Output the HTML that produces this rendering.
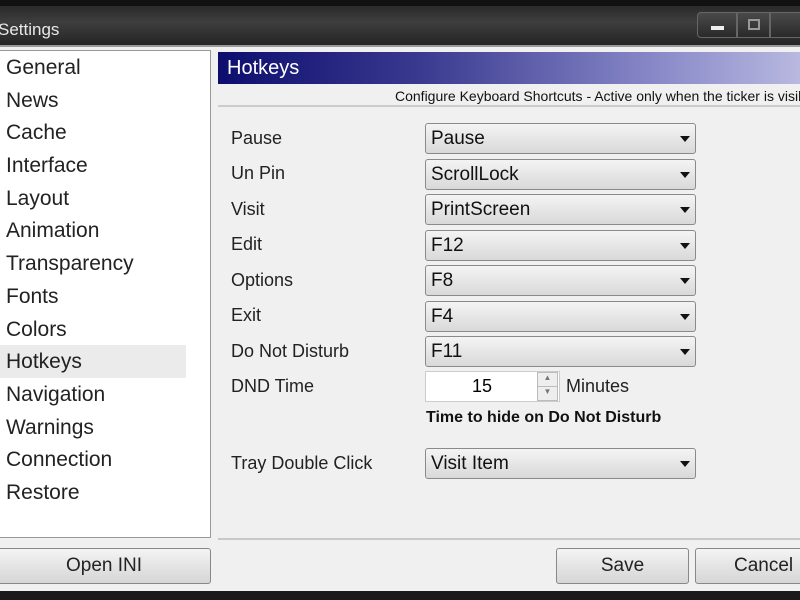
<!DOCTYPE html>
<html><head><style>
*{margin:0;padding:0;box-sizing:border-box}
body{width:800px;height:600px;overflow:hidden;background:#1a1a1a;font-family:"Liberation Sans",sans-serif;position:relative}
.title{position:absolute;left:0;top:0;width:800px;height:46px;background:linear-gradient(#2a2a2a,#3e3e3e 40%,#242424);border-top:6px solid #111}
.title span{position:absolute;left:-2px;top:14px;color:#e8e8e8;font-size:17px}
.ctl{position:absolute;top:6px;height:26px;border:1px solid #666;background:linear-gradient(#4a4a4a,#2a2a2a)}
.body{position:absolute;left:0;top:45px;width:800px;height:546px;background:#f0f0f0;border-top:2px solid #999}
.list{position:absolute;left:-2px;top:3px;width:213px;height:488px;background:#fff;border:1px solid #999}
.list div{height:32.7px;line-height:33px;font-size:21px;color:#222;padding-left:7px}
.list .sel{background:#ebebeb;margin-right:24px}
.hdr{position:absolute;left:218px;top:5px;width:582px;height:32px;background:linear-gradient(90deg,#0d0d6e,#3a3a90 35%,#8888c8 75%,#b8b8e0);color:#fff;font-size:20px;padding:5px 0 0 9px}
.sub{position:absolute;left:218px;top:38px;width:582px;height:22px;border-bottom:2px solid #ccc;font-size:14px;white-space:nowrap;padding-left:177px;padding-top:3px;color:#111}
.lbl{position:absolute;left:231px;font-size:18px;color:#222}
.cb{position:absolute;left:425px;width:271px;height:31px;border:1px solid #8a8a8a;border-radius:3px;background:linear-gradient(#f4f4f4,#e6e6e6 50%,#d9d9d9);font-size:19px;padding:4px 0 0 5px;color:#111}
.cb:after{content:"";position:absolute;right:5px;top:12px;border-left:5px solid transparent;border-right:5px solid transparent;border-top:6px solid #111}
.btn{position:absolute;height:36px;border:1px solid #888;border-radius:3px;background:linear-gradient(#f4f4f4,#e4e4e4 50%,#d6d6d6);font-size:19px;text-align:center;line-height:34px;color:#222}
</style></head><body>
<div class="title"><span>Settings</span>
<div class="ctl" style="left:697px;width:40px;border-radius:4px 0 0 4px"><div style="position:absolute;left:13px;top:13px;width:13px;height:4px;background:#eee"></div></div>
<div class="ctl" style="left:737px;width:33px"><div style="position:absolute;left:10px;top:6px;width:12px;height:11px;border:2px solid #999"></div></div>
<div class="ctl" style="left:770px;width:40px"></div>
</div>
<div class="body">
<div class="list">
<div>General</div><div>News</div><div>Cache</div><div>Interface</div><div>Layout</div><div>Animation</div><div>Transparency</div><div>Fonts</div><div>Colors</div><div class="sel">Hotkeys</div><div>Navigation</div><div>Warnings</div><div>Connection</div><div>Restore</div>
</div>
<div class="hdr">Hotkeys</div>
<div class="sub">Configure Keyboard Shortcuts - Active only when the ticker is visible</div>
<div style="position:absolute;left:218px;top:491px;width:582px;height:2px;background:#c8c8c8"></div>
<div class="btn" style="left:-3px;top:501px;width:214px">Open INI</div>
<div class="btn" style="left:556px;top:501px;width:133px">Save</div>
<div class="btn" style="left:695px;top:501px;width:120px;text-align:left;padding-left:38px">Cancel</div>
</div>
<div class="lbl" style="top:128px">Pause</div><div class="cb" style="top:123px">Pause</div>
<div class="lbl" style="top:163px">Un Pin</div><div class="cb" style="top:159px">ScrollLock</div>
<div class="lbl" style="top:199px">Visit</div><div class="cb" style="top:194px">PrintScreen</div>
<div class="lbl" style="top:234px">Edit</div><div class="cb" style="top:230px">F12</div>
<div class="lbl" style="top:270px">Options</div><div class="cb" style="top:265px">F8</div>
<div class="lbl" style="top:305px">Exit</div><div class="cb" style="top:301px">F4</div>
<div class="lbl" style="top:341px">Do Not Disturb</div><div class="cb" style="top:336px">F11</div>
<div class="lbl" style="top:376px">DND Time</div>
<div style="position:absolute;left:425px;top:371px;width:135px;height:31px;background:#fff;border:1px solid #ccc;font-size:18px;padding:4px 0 0 46px">15</div>
<div style="position:absolute;left:537px;top:372px;width:21px;height:29px;border:1px solid #bbb;background:#eee"><div style="height:14px;border-bottom:1px solid #bbb;font-size:8px;text-align:center;color:#777">▲</div><div style="font-size:8px;text-align:center;color:#777">▼</div></div>
<div class="lbl" style="top:376px;left:566px">Minutes</div>
<div style="position:absolute;left:426px;top:409px;font-size:16px;font-weight:bold;color:#111">Time to hide on Do Not Disturb</div>
<div class="lbl" style="top:453px">Tray Double Click</div><div class="cb" style="top:448px">Visit Item</div>
</body></html>
